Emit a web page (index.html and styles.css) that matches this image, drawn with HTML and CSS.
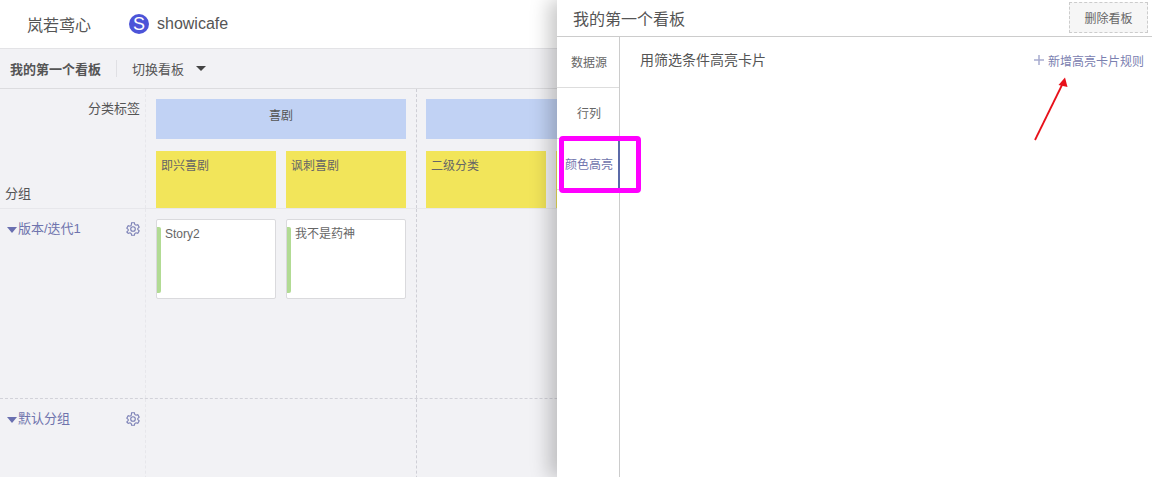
FILE: index.html
```html
<!DOCTYPE html>
<html lang="zh-CN">
<head>
<meta charset="utf-8">
<title>看板</title>
<link rel="stylesheet" href="styles.css">
</head>
<body>
<div class="page">
  <header class="topnav">
    <span class="org">岚若鸢心</span>
    <span class="logo">S</span>
    <span class="project">showicafe</span>
  </header>
  <div class="toolbar">
    <strong class="board-name">我的第一个看板</strong>
    <span class="sep"></span>
    <span class="switch">切换看板</span>
    <span class="caret-dark"></span>
  </div>
  <div class="board">
    <div class="row row-head">
      <div class="lane-head head-cell">
        <span class="label-cat">分类标签</span>
        <span class="label-group">分组</span>
      </div>
      <div class="col">
        <div class="cat">喜剧</div>
        <div class="subs">
          <div class="sub">即兴喜剧</div>
          <div class="sub">讽刺喜剧</div>
        </div>
      </div>
      <div class="col col-next">
        <div class="cat">&nbsp;</div>
        <div class="subs">
          <div class="sub">二级分类</div>
          <div class="sub">&nbsp;</div>
        </div>
      </div>
    </div>
    <div class="row row-lane">
      <div class="lane-head lane-title">
        <span class="caret-blue"></span><span class="lane-name">版本/迭代1</span>
        <svg class="gear" viewBox="0 0 14 14" aria-hidden="true"><path d="M5.6.7h2.800l.4 1.800 1.200.7 1.800-.5 1.400 2.400-1.400 1.300v1.200l1.400 1.300-1.400 2.400-1.800-.5-1.200.7-.4 1.800H5.600l-.4-1.800-1.200-.7-1.800.5L.8 9.900l1.400-1.300V7.400L.8 6.100l1.400-2.400 1.800.5 1.200-.7z"/><circle cx="7" cy="7" r="2.300"/></svg>
      </div>
      <div class="col">
        <div class="cards">
          <div class="card">Story2</div>
          <div class="card">我不是药神</div>
        </div>
      </div>
      <div class="col col-next"></div>
    </div>
    <div class="row row-last">
      <div class="lane-head lane-title">
        <span class="caret-blue"></span><span class="lane-name">默认分组</span>
        <svg class="gear" viewBox="0 0 14 14" aria-hidden="true"><path d="M5.6.7h2.800l.4 1.800 1.200.7 1.800-.5 1.400 2.400-1.400 1.300v1.200l1.400 1.300-1.400 2.400-1.800-.5-1.200.7-.4 1.800H5.600l-.4-1.800-1.200-.7-1.800.5L.8 9.900l1.400-1.300V7.400L.8 6.100l1.400-2.400 1.800.5 1.200-.7z"/><circle cx="7" cy="7" r="2.300"/></svg>
      </div>
      <div class="col"></div>
      <div class="col col-next"></div>
    </div>
  </div>

  <aside class="panel">
    <div class="panel-head">
      <span class="panel-title">我的第一个看板</span>
      <button class="del-btn" type="button">删除看板</button>
    </div>
    <div class="panel-body">
      <nav class="tabs">
        <div class="tab">数据源</div>
        <div class="tab">行列</div>
        <div class="tab tab-active">颜色高亮</div>
      </nav>
      <div class="panel-main">
        <span class="rule-title">用筛选条件高亮卡片</span>
        <span class="add-rule">
          <svg class="plus" viewBox="0 0 10 10" aria-hidden="true"><path d="M5 0v10M0 5h10"/></svg>
          新增高亮卡片规则
        </span>
      </div>
    </div>
  </aside>

  <div class="mark-box"></div>
  <svg class="mark-arrow" viewBox="0 0 40 70" aria-hidden="true">
    <path class="arrow-line" d="M3 66L30 11"/>
    <path class="arrow-head" d="M33 3.500L35.500 13L26.500 11z"/>
  </svg>
</div>
</body>
</html>
```
FILE: styles.css
```css
* { box-sizing: border-box; }
html, body { margin: 0; padding: 0; height: 100%; overflow: hidden; }
body {
  font-family: "Liberation Sans", "Noto Sans CJK SC", sans-serif;
  font-size: 12px;
  color: #555;
  background: #f2f2f5;
}
.page { position: relative; width: 1152px; height: 477px; overflow: hidden; }

.topnav {
  height: 49px;
  background: #fff;
  border-bottom: 1px solid #e3e3e6;
  display: flex;
  align-items: center;
  padding: 0 0 0 27px;
  font-size: 16px;
  color: #555;
}
.org { width: 102px; }
.logo {
  width: 20px; height: 20px; border-radius: 50%;
  background: #4c54d8; color: #fff;
  font-size: 18px; line-height: 20px; text-align: center;
  margin-right: 8px;
}
.project { color: #555; }

.toolbar {
  height: 40px;
  display: flex;
  align-items: center;
  padding-left: 10px;
  border-bottom: 1px solid #dcdcdf;
  font-size: 13px;
  background: #f2f2f5;
}
.board-name { font-weight: 700; color: #555; }
.sep { width: 1px; height: 17px; background: #e0e0e4; margin: 0 15px; }
.caret-dark {
  width: 0; height: 0; margin-left: 12px;
  border-left: 5px solid transparent; border-right: 5px solid transparent;
  border-top: 5px solid #444;
}

.board { display: flex; flex-direction: column; }
.row { display: flex; }
.row-head { height: 120px; border-bottom: 1px solid #e7e7eb; }
.row-lane { height: 190px; border-bottom: 1px dashed #d2d2d9; }
.row-last { height: 90px; }

.lane-head { width: 146px; flex: none; border-right: 1px dashed #e7e7eb; }
.head-cell {
  display: flex; flex-direction: column; justify-content: space-between;
  font-size: 13px; padding: 9px 5px 6px;
}
.label-cat { align-self: flex-end; }
.label-group { align-self: flex-start; }

.col { width: 270px; flex: none; padding: 10px 10px 0; }
.col-next { border-left: 1px dashed #cfcfd6; padding-left: 9px; }
.cat {
  height: 40px; background: #c1d2f4; text-align: center; line-height: 34px; color: #555;
}
.subs { display: flex; gap: 10px; margin-top: 12px; }
.sub { width: 120px; height: 57px; flex: none; background: #f2e55a; padding: 6px 5px; line-height: 18px; color: #666; }

.lane-title {
  display: flex; align-items: flex-start; padding: 11px 5px 0 7px;
  font-size: 13px; color: #6f74ad; line-height: 18px;
}
.caret-blue {
  width: 0; height: 0; margin: 7px 1px 0 0;
  border-left: 5px solid transparent; border-right: 5px solid transparent;
  border-top: 6px solid #6a70b0;
}
.lane-name { flex: 1; }
.gear { width: 14px; height: 14px; margin-top: 2px; fill: none; stroke: #7a7fb5; stroke-width: 1.100; }

.cards { display: flex; gap: 10px; }
.card {
  position: relative; width: 120px; height: 80px; background: #fff;
  border: 1px solid #dadadd; border-radius: 2px;
  padding: 4px 8px; line-height: 20px; color: #666;
}
.card::before {
  content: ""; position: absolute; left: 0; top: 7px; width: 4px; height: 66px;
  background: #b2db94; border-radius: 0 2px 2px 0;
}

.panel {
  position: absolute; left: 557px; top: 0; width: 595px; height: 477px;
  background: #fff;
  box-shadow: -8px 0 18px rgba(0, 0, 0, .22);
  display: flex; flex-direction: column;
}
.panel-head {
  height: 37px; flex: none; display: flex; align-items: center; justify-content: space-between;
  border-bottom: 1px solid #ccc; padding: 0 4px 0 16px;
}
.panel-title { font-size: 16px; color: #555; }
.del-btn {
  width: 79px; height: 31px; margin-top: -1px; background: #f6f6f6;
  border: 1px dashed #ccc; font: inherit; color: #666; padding: 0;
}
.panel-body { flex: 1; display: flex; }
.tabs { width: 63px; flex: none; border-right: 1px solid #ccc; }
.tab {
  height: 51px; border-bottom: 1px solid #ddd; text-align: center; line-height: 52px; color: #666;
  width: 62px; padding-left: 2px;
}
.tab-active {
  width: 63px; border-right: 2px solid #5b6aa8; color: #6f74ad; padding-left: 3px;
}
.panel-main {
  flex: 1; display: flex; justify-content: space-between; align-items: center; align-self: flex-start;
  padding: 14px 8px 0 20px;
}
.rule-title { font-size: 14px; color: #555; margin-top: -2px; }
.add-rule { display: flex; align-items: center; gap: 4px; color: #7a80b0; }
.plus { width: 10px; height: 10px; fill: none; stroke: #a8acd0; stroke-width: 1.500; }

.mark-box {
  position: absolute; left: 559px; top: 136px; width: 82px; height: 57px;
  border: 5px solid #f0f; border-radius: 4px;
}
.mark-arrow { position: absolute; left: 1032px; top: 74px; width: 40px; height: 70px; }
.arrow-line { stroke: #e8101a; stroke-width: 1.800; fill: none; }
.arrow-head { fill: #e8101a; }
```
